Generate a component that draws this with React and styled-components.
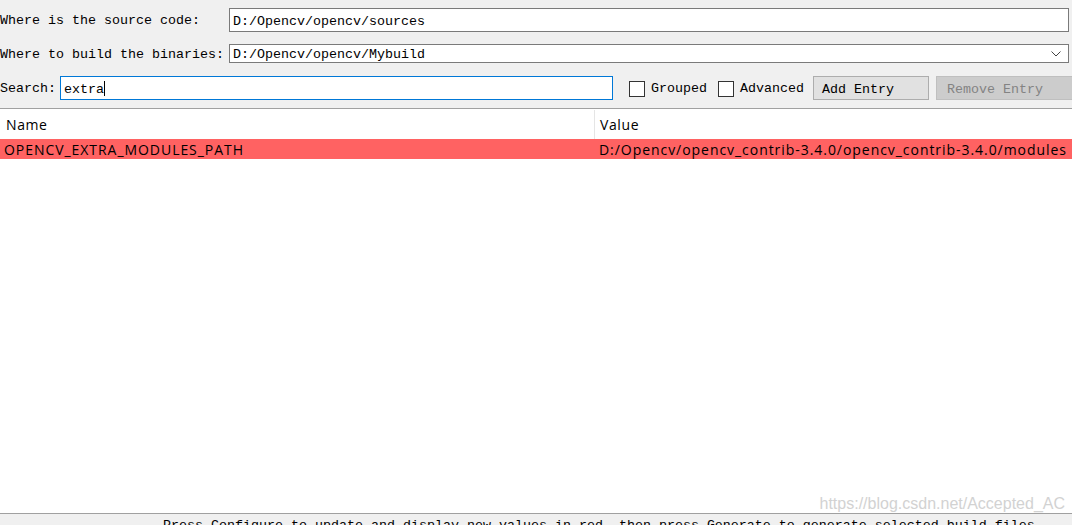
import React from "react";
import styled, { createGlobalStyle } from "styled-components";

const Global = createGlobalStyle`
  html, body { margin: 0; padding: 0; background: #f0f0f0; }
  #root { width: 1072px; height: 525px; }
`;

const mono = `"Liberation Mono", "DejaVu Sans Mono", monospace`;
const sans = `"Open Sans", "Noto Sans", "Liberation Sans", sans-serif`;

const Page = styled.div`
  position: relative;
  width: 1072px;
  height: 525px;
  display: flex;
  flex-direction: column;
  overflow: hidden;
  background: #f0f0f0;
  font-family: ${mono};
  font-size: 13.33px;
  color: #000;
`;

const Form = styled.div`
  display: flex;
  flex-direction: column;
  padding: 8px 3px 0 0;
`;

const Row = styled.div`
  display: flex;
  align-items: center;
  height: ${(p) => p.$h}px;
  margin-top: ${(p) => p.$mt || 0}px;
`;

const Label = styled.div`
  width: ${(p) => p.$w}px;
  flex: none;
  white-space: pre;
  line-height: 16px;
  padding-top: 2px;
`;

const Field = styled.div`
  box-sizing: border-box;
  height: 100%;
  flex: ${(p) => (p.$w ? "none" : "1")};
  width: ${(p) => (p.$w ? `${p.$w}px` : "auto")};
  background: #fff;
  border: 1px solid ${(p) => (p.$focus ? "#0078d7" : "#7a7a7a")};
  display: flex;
  align-items: center;
  padding: 2px 0 0 3px;
  white-space: pre;
  position: relative;
`;

const Caret = styled.span`
  display: inline-block;
  width: 1px;
  height: 15px;
  background: #000;
  margin-top: -2px;
`;

const Chevron = styled.svg`
  position: absolute;
  right: 7px;
  top: 50%;
  margin-top: -3px;
`;

const Check = styled.label`
  display: flex;
  align-items: center;
  margin-left: ${(p) => p.$ml}px;
  white-space: pre;
  padding-top: 1px;
`;

const Box = styled.span`
  box-sizing: border-box;
  width: 16px;
  height: 16px;
  border: 1px solid #333;
  background: #fff;
  margin-right: 6px;
`;

const Button = styled.div`
  box-sizing: border-box;
  height: 24px;
  width: ${(p) => p.$w}px;
  flex: none;
  margin-left: ${(p) => p.$ml}px;
  display: flex;
  align-items: center;
  padding: 2px 0 0 ${(p) => p.$pl}px;
  white-space: pre;
  background: ${(p) => (p.$disabled ? "#cccccc" : "#e1e1e1")};
  border: 1px solid ${(p) => (p.$disabled ? "#bfbfbf" : "#adadad")};
  color: ${(p) => (p.$disabled ? "#838383" : "#000")};
`;

const Table = styled.div`
  flex: 1;
  margin-top: 8px;
  background: #fff;
  border-top: 1px solid #a0a0a0;
  display: flex;
  flex-direction: column;
  font-family: ${sans};
  font-size: 14px;
`;

const TRow = styled.div`
  display: grid;
  grid-template-columns: 594px 1fr;
  height: ${(p) => p.$h}px;
  background: ${(p) => p.$bg || "#fff"};
  margin-top: ${(p) => p.$mt || 0}px;
  letter-spacing: ${(p) => p.$ls}px;
`;

const Cell = styled.div`
  display: flex;
  align-items: center;
  padding-left: ${(p) => p.$pl}px;
  white-space: pre;
  color: #000;
  border-left: ${(p) => (p.$divider ? "1px solid #e5e5e5" : "none")};
`;

const Status = styled.div`
  box-sizing: border-box;
  height: 12px;
  flex: none;
  border-top: 1px solid #a0a0a0;
  background: #f0f0f0;
  padding: 4px 0 0 163px;
  white-space: pre;
  line-height: 16px;
  overflow: hidden;
`;

const Watermark = styled.div`
  position: absolute;
  right: 7px;
  bottom: 12px;
  font-family: "Liberation Sans", Arial, sans-serif;
  font-size: 16px;
  line-height: 18px;
  color: #d2d2d2;
`;

export default function App() {
  return (
    <Page>
      <Global />
      <Form>
        <Row $h={24}>
          <Label $w={229}>Where is the source code:</Label>
          <Field>D:/Opencv/opencv/sources</Field>
        </Row>
        <Row $h={19} $mt={12}>
          <Label $w={229}>Where to build the binaries:</Label>
          <Field>
            D:/Opencv/opencv/Mybuild
            <Chevron width="10" height="6" viewBox="0 0 10 6">
              <path d="M0.5 0.5 L5 5 L9.5 0.5" fill="none" stroke="#444" strokeWidth="1" />
            </Chevron>
          </Field>
        </Row>
        <Row $h={24} $mt={13}>
          <Label $w={60}>Search:</Label>
          <Field $w={553} $focus>
            extra
            <Caret />
          </Field>
          <Check $ml={16}>
            <Box />
            Grouped
          </Check>
          <Check $ml={11}>
            <Box />
            Advanced
          </Check>
          <Button $w={116} $ml={9} $pl={8}>
            Add Entry
          </Button>
          <Button $w={140} $ml={7} $pl={10} $disabled>
            Remove Entry
          </Button>
        </Row>
      </Form>
      <Table>
        <TRow $h={29} $mt={1} $ls={0.6}>
          <Cell $pl={6}>Name</Cell>
          <Cell $pl={5} $divider>
            Value
          </Cell>
        </TRow>
        <TRow $h={20} $bg="#ff6262" $ls={0.95}>
          <Cell $pl={4}>OPENCV_EXTRA_MODULES_PATH</Cell>
          <Cell $pl={5}>D:/Opencv/opencv_contrib-3.4.0/opencv_contrib-3.4.0/modules</Cell>
        </TRow>
      </Table>
      <Status>
        Press Configure to update and display new values in red, then press Generate to generate selected build files.
      </Status>
      <Watermark>https://blog.csdn.net/Accepted_AC</Watermark>
    </Page>
  );
}
